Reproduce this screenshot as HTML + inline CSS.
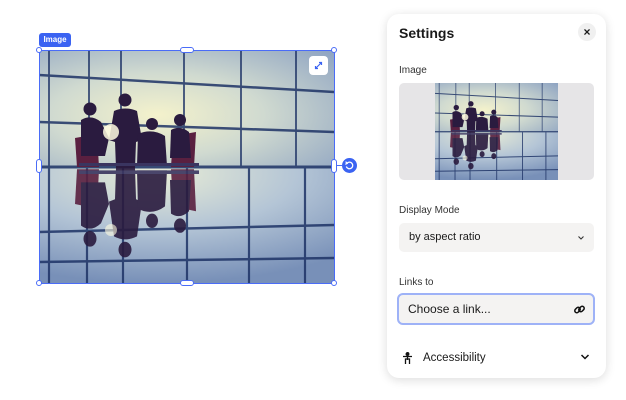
<!DOCTYPE html>
<html><head><style>
*{margin:0;padding:0;box-sizing:border-box}
body{width:626px;height:400px;background:#fff;font-family:"Liberation Sans",sans-serif;position:relative;overflow:hidden;color:#1a1a1a}
.abs{position:absolute}
.h{position:absolute;width:6px;height:6px;border:1px solid #4a6cf7;background:#fff;border-radius:50%}
.panel{left:387px;top:14px;width:219px;height:364px;background:#fff;border-radius:12px;box-shadow:0 2px 10px rgba(0,0,0,.14)}
.lbl{font-size:10px;color:#333}
</style></head><body>
<svg width="0" height="0" style="position:absolute">
<defs>
<radialGradient id="bg" cx="0.4" cy="0.55" r="0.8">
<stop offset="0" stop-color="#f4f2cc"/><stop offset="0.45" stop-color="#d0dad0"/><stop offset="1" stop-color="#8fa4c2"/></radialGradient>
<radialGradient id="fl" cx="0.4" cy="0.05" r="0.95">
<stop offset="0" stop-color="#e8ecd6"/><stop offset="0.5" stop-color="#b4c5d6"/><stop offset="1" stop-color="#7890b8"/></radialGradient>
<g id="ppl">
<path d="M36 88 L58 84 L60 117 L38 117Z" fill="#5a2040"/>
<path d="M134 86 L157 82 L155 117 L132 117Z" fill="#5a2040"/>
<g fill="#2a1b3f">
<circle cx="51" cy="59" r="6.5"/><path d="M42 70 Q52 64 62 72 L70 88 L66 106 L42 106 Z"/>
<circle cx="86" cy="50" r="6.5"/><path d="M75 61 Q86 56 98 61 L103 90 L97 92 L96 118 L77 118 L76 92 L70 90Z"/>
<circle cx="113" cy="74" r="6"/><path d="M99 84 Q113 78 126 86 L128 116 L98 116Z"/>
<circle cx="141" cy="70" r="6"/><path d="M132 80 Q141 75 150 82 L152 108 L131 108Z"/>
<rect x="40" y="113" width="120" height="3" fill="#3a3560"/>
</g>
</g>
<g id="scene">
<rect width="295" height="118" fill="url(#bg)"/>
<rect y="118" width="295" height="115" fill="url(#fl)"/>
<g stroke="#1e3366" stroke-width="2.5" fill="none" opacity=".85">
<path d="M0 25 L295 42"/><path d="M0 72 L295 82"/><path d="M0 117 L295 117" stroke-width="3"/>
<path d="M10 0 V118 M50 0 V118 M82 0 V118 M145 0 V118 M202 0 V118 M257 0 V118" stroke-width="1.8"/>
<path d="M0 182 L295 175"/><path d="M0 212 L295 208"/>
<path d="M10 118 V233 M48 118 V233 M84 118 V233 M148 118 V233 M210 118 V233 M266 118 V233" stroke-width="2.2"/>
</g>
<use href="#ppl"/>
<use href="#ppl" transform="translate(0,259.6) scale(1,-1.2)" opacity=".9"/>
<circle cx="72" cy="82" r="8" fill="#fffbe0" opacity=".85"/>
<circle cx="72" cy="180" r="6" fill="#fffbe0" opacity=".6"/>
</g>
</defs></svg>

<div class="abs" style="left:39px;top:33px;width:32px;height:14px;background:#3b63f2;border-radius:3px;color:#fff;font-size:8px;font-weight:bold;line-height:14px;text-align:center">Image</div>
<svg class="abs" style="left:39px;top:50px" width="295" height="233" viewBox="0 0 295 233"><use href="#scene"/></svg>
<div class="abs" style="left:39px;top:50px;width:296px;height:234px;border:1px solid #4a6cf7"></div>
<div class="h" style="left:36px;top:47px"></div><div class="h" style="left:331px;top:47px"></div>
<div class="h" style="left:36px;top:280px"></div><div class="h" style="left:331px;top:280px"></div>
<div class="abs" style="left:180px;top:47px;width:14px;height:6px;border:1px solid #4a6cf7;background:#fff;border-radius:3px"></div>
<div class="abs" style="left:180px;top:280px;width:14px;height:6px;border:1px solid #4a6cf7;background:#fff;border-radius:3px"></div>
<div class="abs" style="left:36px;top:159px;width:6px;height:14px;border:1px solid #4a6cf7;background:#fff;border-radius:3px"></div>
<div class="abs" style="left:331px;top:159px;width:6px;height:14px;border:1px solid #4a6cf7;background:#fff;border-radius:3px"></div>
<div class="abs" style="left:337px;top:165px;width:5px;height:1px;background:#4a6cf7"></div>
<div class="abs" style="left:342px;top:158px;width:15px;height:15px;background:#3b63f2;border-radius:50%"></div>
<svg class="abs" style="left:342px;top:158px" width="15" height="15" viewBox="0 0 15 15"><path d="M5 5.2 A3.3 3.3 0 1 1 4.3 8.5" stroke="#fff" stroke-width="1.3" fill="none"/><path d="M3.6 3.6 L5.2 5.4 L3.3 6.3" stroke="#fff" stroke-width="1.2" fill="none"/></svg>
<div class="abs" style="left:309px;top:56px;width:19px;height:19px;background:#fff;border-radius:4px"></div>
<svg class="abs" style="left:309px;top:56px" width="19" height="19" viewBox="0 0 19 19"><path d="M7 12 L12 7 M10 6.5 H12.5 V9 M6.5 10 V12.5 H9" stroke="#3b63f2" stroke-width="1.2" fill="none"/></svg>

<div class="abs panel"></div>
<div class="abs" style="left:399px;top:25px;font-size:14px;font-weight:600">Settings</div>
<div class="abs" style="left:578px;top:23px;width:18px;height:18px;background:#f0f0f0;border-radius:50%;text-align:center;font-size:12px;line-height:18px;font-weight:bold">×</div>
<div class="abs lbl" style="left:399px;top:65px">Image</div>
<div class="abs" style="left:399px;top:83px;width:195px;height:97px;background:#e6e5e7;border-radius:5px"></div>
<svg class="abs" style="left:435px;top:83px" width="123" height="97" viewBox="0 0 295 233" preserveAspectRatio="none"><use href="#scene"/></svg>
<div class="abs lbl" style="left:399px;top:205px">Display Mode</div>
<div class="abs" style="left:399px;top:223px;width:195px;height:29px;background:#f4f3f2;border-radius:5px;font-size:11px;line-height:29px;padding-left:10px">by aspect ratio</div>
<svg class="abs" style="left:577px;top:235px" width="8" height="6" viewBox="0 0 8 6"><path d="M1.5 1.5 L4 4 L6.5 1.5" stroke="#333" stroke-width="1.1" fill="none"/></svg>
<div class="abs lbl" style="left:399px;top:277px">Links to</div>
<div class="abs" style="left:397px;top:293px;width:198px;height:32px;background:#f4f3f2;border:2px solid #9eb2f7;border-radius:6px;font-size:12px;line-height:28px;padding-left:9px">Choose a link...</div>
<svg class="abs" style="left:573px;top:303px" width="13" height="13" viewBox="0 0 13 13"><g stroke="#111" stroke-width="1.5" fill="none"><rect x="1.5" y="5" width="6" height="4" rx="2" transform="rotate(-45 4.5 7)"/><rect x="5.5" y="4" width="6" height="4" rx="2" transform="rotate(-45 8.5 6)"/></g></svg>
<svg class="abs" style="left:402px;top:352px" width="11" height="13" viewBox="0 0 11 13"><g stroke="#111" stroke-width="1.3" fill="none"><circle cx="5.5" cy="2" r="1.3" fill="#111"/><path d="M1 4.5 H10 M5.5 4.5 V8 M3.5 12 V7 H7.5 V12"/></g></svg>
<div class="abs" style="left:423px;top:352px;font-size:11.5px">Accessibility</div>
<svg class="abs" style="left:580px;top:353px" width="10" height="8" viewBox="0 0 10 8"><path d="M1.5 2 L5 5.5 L8.5 2" stroke="#111" stroke-width="1.5" fill="none"/></svg>
</body></html>
